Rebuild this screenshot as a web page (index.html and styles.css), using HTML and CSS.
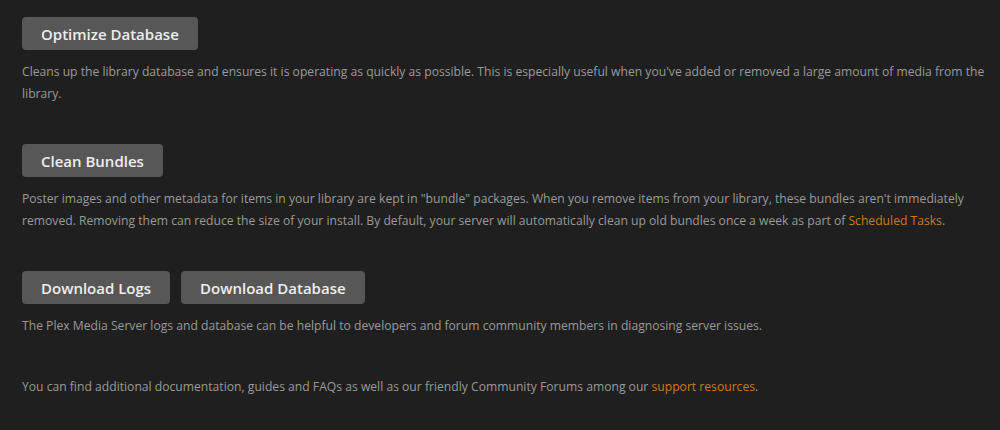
FILE: index.html
```html
<!DOCTYPE html>
<html lang="en">
<head>
    <link rel="stylesheet" href="styles.css">
    <meta charset="UTF-8">
    <title>Troubleshooting</title>
</head>
<body>
    <div class="page">
        <div class="section">
            <div class="button-row">
                <button type="button">Optimize Database</button>
            </div>
            <p class="help">Cleans up the library database and ensures it is operating as quickly as possible. This is especially useful when you've added or removed a large amount of media from the library.</p>
        </div>

        <div class="section">
            <div class="button-row">
                <button type="button">Clean Bundles</button>
            </div>
            <p class="help">Poster images and other metadata for items in your library are kept in "bundle" packages. When you remove items from your library, these bundles aren't immediately removed. Removing them can reduce the size of your install. By default, your server will automatically clean up old bundles once a week as part of <a href="#">Scheduled Tasks</a>.</p>
        </div>

        <div class="section">
            <div class="button-row">
                <button type="button">Download Logs</button>
                <button type="button">Download Database</button>
            </div>
            <p class="help">The Plex Media Server logs and database can be helpful to developers and forum community members in diagnosing server issues.</p>
        </div>

        <p class="help">You can find additional documentation, guides and FAQs as well as our friendly Community Forums among our <a href="#">support resources</a>.</p>
    </div>
</body>
</html>
```

FILE: styles.css
```css
body {
    margin: 0;
    background-color: #1f1f1f;
    font-family: "Open Sans", Arial, sans-serif;
}

.page {
    padding: 17px 12px 0 22px;
}

.section {
    margin-bottom: 39px;
}

.button-row {
    display: flex;
    gap: 11px;
}

button {
    height: 33px;
    padding: 0 19px;
    background-color: #575757;
    border: none;
    border-radius: 4px;
    color: #eeeeee;
    font-family: "Open Sans", Arial, sans-serif;
    font-size: 15px;
    font-weight: 600;
    cursor: pointer;
}

button:hover {
    opacity: 0.9;
}

.help {
    margin: 11px 0 0;
    color: #9a9a9a;
    font-size: 12.15px;
    line-height: 22px;
}

.help a {
    color: #cc7b19;
    text-decoration: none;
}
```
